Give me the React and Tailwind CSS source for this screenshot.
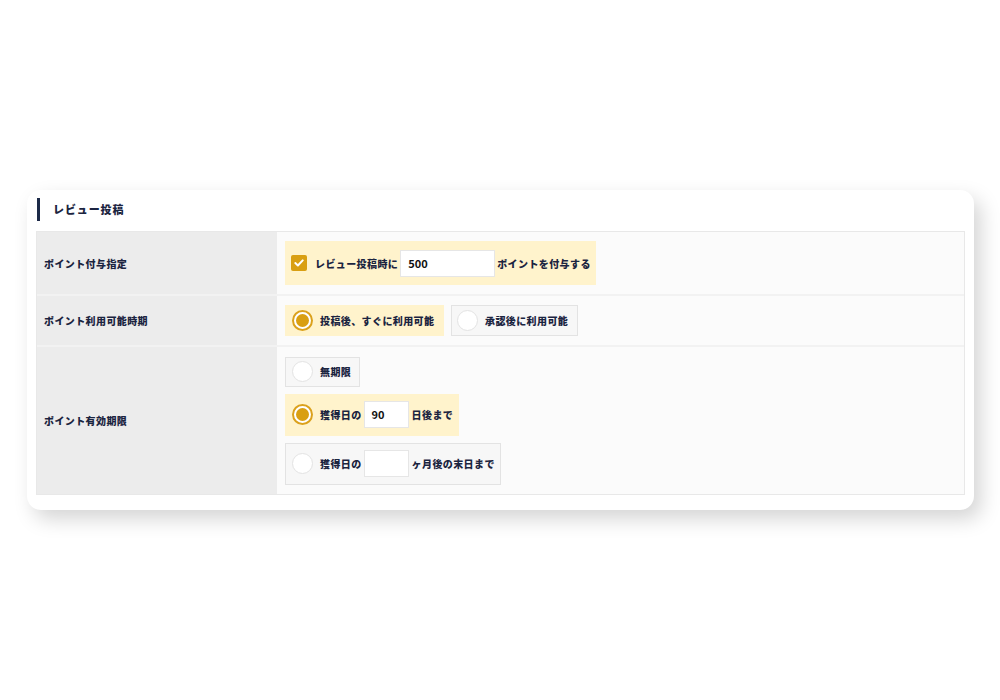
import React from "react";

const font = { fontFamily: '"Noto Sans CJK JP", "Noto Sans", sans-serif' };

const Radio = ({ on }) =>
  on ? (
    <span className="flex h-[21px] w-[21px] shrink-0 items-center justify-center rounded-full border-2 border-[#dba11c] bg-white">
      <span className="h-[13px] w-[13px] rounded-full bg-[#d99f12]" />
    </span>
  ) : (
    <span className="h-[21px] w-[21px] shrink-0 rounded-full border border-[#e3e3e3] bg-white" />
  );

const Check = () => (
  <span className="flex h-[16px] w-[16px] shrink-0 items-center justify-center rounded-[2px] bg-[#d99f12]">
    <svg width="10" height="8" viewBox="0 0 10 8" fill="none">
      <path d="M1.3 4.1 L3.9 6.5 L8.7 1.4" stroke="#fff" strokeWidth="2" strokeLinecap="round" strokeLinejoin="round" />
    </svg>
  </span>
);

const Field = ({ value, w }) => (
  <span className={`flex h-[27px] ${w} items-center border border-[#e6e6e6] bg-white pl-[7px] text-[11px] font-semibold tracking-normal text-[#111]`}>
    {value}
  </span>
);

const Row = ({ label, h, children, last }) => (
  <div className={`flex ${h} ${last ? "" : "border-b-2 border-[#f2f2f2]"}`}>
    <div className="flex w-[240px] shrink-0 items-center bg-[#ececec] pl-[7px]">{label}</div>
    <div className="flex flex-1 flex-col justify-center gap-[7px] bg-[#fbfbfb] pl-[8px]">{children}</div>
  </div>
);

export default function App() {
  return (
    <div className="flex h-[700px] w-[1000px] items-start bg-white pt-[190px] pl-[27px]" style={font}>
      <div className="w-[947px] rounded-[14px] bg-white pt-[8px] pb-[15px] shadow-[7px_9px_20px_rgba(0,0,0,0.17)]">
        <div className="flex h-[23px] items-center pl-[10px]">
          <span className="h-[23px] w-[3px] bg-[#1d2a48]" />
          <span className="ml-[13px] text-[11px] font-black tracking-[0.08em] text-[#1b2440]">レビュー投稿</span>
        </div>
        <div className="mt-[10px] ml-[9px] w-[929px] border border-[#e8e8e8] text-[10px] font-black tracking-[0.04em] text-[#1b2440]">
          <Row label="ポイント付与指定" h="h-[64px]">
            <div className="flex h-[44px] w-[311px] items-center bg-[#fff3cc] pl-[6px]">
              <Check />
              <span className="ml-[8px] mr-[2px]">レビュー投稿時に</span>
              <Field value="500" w="w-[95px]" />
              <span className="ml-[2px]">ポイントを付与する</span>
            </div>
          </Row>
          <Row label="ポイント利用可能時期" h="h-[51px]">
            <div className="flex gap-[7px]">
              <div className="flex h-[31px] w-[159px] items-center bg-[#fff3cc] pl-[7px]">
                <Radio on />
                <span className="ml-[7px]">投稿後、すぐに利用可能</span>
              </div>
              <div className="flex h-[31px] w-[127px] items-center border border-[#e3e3e3] bg-[#f7f7f7] pl-[5px]">
                <Radio />
                <span className="ml-[7px]">承認後に利用可能</span>
              </div>
            </div>
          </Row>
          <Row label="ポイント有効期限" h="h-[147px]" last>
            <div className="flex h-[30px] w-[75px] items-center border border-[#e3e3e3] bg-[#f7f7f7] pl-[6px]">
              <Radio />
              <span className="ml-[7px]">無期限</span>
            </div>
            <div className="flex h-[42px] w-[174px] items-center bg-[#fff3cc] pl-[7px]">
              <Radio on />
              <span className="ml-[7px] mr-[2px]">獲得日の</span>
              <Field value="90" w="w-[45px]" />
              <span className="ml-[3px]">日後まで</span>
            </div>
            <div className="flex h-[42px] w-[216px] items-center border border-[#e3e3e3] bg-[#f7f7f7] pl-[6px]">
              <Radio />
              <span className="ml-[7px] mr-[2px]">獲得日の</span>
              <Field value="" w="w-[45px]" />
              <span className="ml-[3px]">ヶ月後の末日まで</span>
            </div>
          </Row>
        </div>
      </div>
    </div>
  );
}
